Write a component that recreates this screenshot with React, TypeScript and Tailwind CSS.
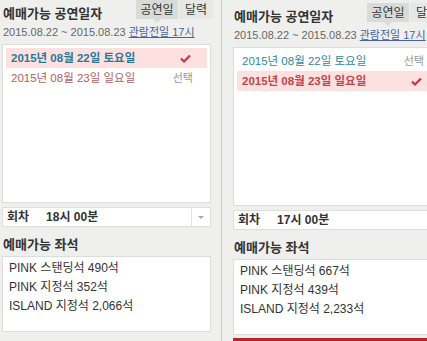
const font = { fontFamily: '"Liberation Sans", "Noto Sans CJK KR", sans-serif' };

type DateRow = { label: string; color: string; selected: boolean };

const Check = () => (
  <svg width="11" height="9" viewBox="0 0 11 9" className="shrink-0">
    <path d="M1 4.5 L4 7.5 L10 1.5" stroke="#c8354a" strokeWidth="2.2" fill="none" />
  </svg>
);

const Panel = ({
  dates,
  time,
  seats,
  showArrow,
}: {
  dates: DateRow[];
  time: string;
  seats: string[];
  showArrow: boolean;
}) => {
  return (
    <div className="flex w-[213px] shrink-0 flex-col">
      <div className="flex h-[22px] items-start justify-between">
        <h2 className="mt-[6px] pl-[3px] text-[13px] font-bold leading-[16px] text-[#333]">
          예매가능 공연일자
        </h2>
        <div className="flex">
          <div className="relative flex h-[19px] w-[42px] items-center justify-center bg-[#d9dbd9] text-[12px] text-[#333]">
            공연일
            <span className="absolute -bottom-[4px] left-1/2 h-0 w-0 -translate-x-1/2 border-x-[4px] border-t-[4px] border-x-transparent border-t-[#d9dbd9]" />
          </div>
          <div className="ml-px flex h-[19px] w-[34px] items-center justify-center bg-[#e6e8e6] text-[12px] text-[#333]">
            달력
          </div>
        </div>
      </div>
      <div className="mt-[3px] whitespace-nowrap pl-[3px] text-[11px] leading-[14px] text-[#666]">
        2015.08.22 ~ 2015.08.23{" "}
        <span className="text-[#4a5fa0] underline">관람전일 17시</span>
      </div>
      <div className="mx-[2px] mt-[5px] h-[159px] border border-[#dcdedc] bg-white px-[3px] pt-[3px]">
        {dates.map((d) => (
          <div
            key={d.label}
            className={`flex h-[20px] items-center justify-between pl-[5px] pr-[16px] ${d.selected ? "bg-[#fde1e1]" : ""}`}
          >
            <span
              className={`text-[11.5px] leading-[14px] ${d.selected ? "font-bold" : ""}`}
              style={{ color: d.color }}
            >
              {d.label}
            </span>
            {d.selected ? (
              <Check />
            ) : (
              <span className="-mr-[2px] text-[11px] text-[#999]">선택</span>
            )}
          </div>
        ))}
      </div>
      <div className="mx-[2px] mt-[4px] flex h-[20px] items-center border border-[#dcdedc] bg-white">
        <span className="flex-1 pl-[4px] text-[12px] font-bold leading-[14px] text-[#333]">
          회차<span className="ml-[17px]">{time}</span>
        </span>
        {showArrow && (
          <span className="flex h-full w-[19px] items-center justify-center border-l border-[#e2e4e2]">
            <span className="h-0 w-0 border-x-[3px] border-t-[3px] border-x-transparent border-t-[#aaa]" />
          </span>
        )}
      </div>
      <h3 className="mt-[10px] pl-[3px] text-[13px] font-bold leading-[16px] text-[#333]">
        예매가능 좌석
      </h3>
      <div className="mx-[2px] mt-[3px] h-[76px] border border-[#dcdedc] bg-white pl-[6px] pt-[2px]">
        {seats.map((s) => (
          <div key={s} className="h-[19px] text-[12px] leading-[19px] text-[#333]">
            {s}
          </div>
        ))}
      </div>
    </div>
  );
};

export default function App() {
  return (
    <div
      className="flex h-[341px] w-[427px] overflow-hidden bg-[#eff0ee]"
      style={font}
    >
      <Panel
        dates={[
          { label: "2015년 08월 22일 토요일", color: "#2a7896", selected: true },
          { label: "2015년 08월 23일 일요일", color: "#b25e62", selected: false },
        ]}
        time="18시 00분"
        seats={["PINK 스탠딩석 490석", "PINK 지정석 352석", "ISLAND 지정석 2,066석"]}
        showArrow
      />
      <div className="ml-[8px] flex shrink-0 border-l border-[#c9cbc9] pl-[9px]">
        <div className="flex flex-col pt-[3px]">
          <Panel
            dates={[
              { label: "2015년 08월 22일 토요일", color: "#2a8aa0", selected: false },
              { label: "2015년 08월 23일 일요일", color: "#c0464e", selected: true },
            ]}
            time="17시 00분"
            seats={["PINK 스탠딩석 667석", "PINK 지정석 439석", "ISLAND 지정석 2,233석"]}
            showArrow={false}
          />
          <div className="mx-[2px] mt-[3px] h-[4px] bg-[#b0262e]" />
        </div>
      </div>
    </div>
  );
}
